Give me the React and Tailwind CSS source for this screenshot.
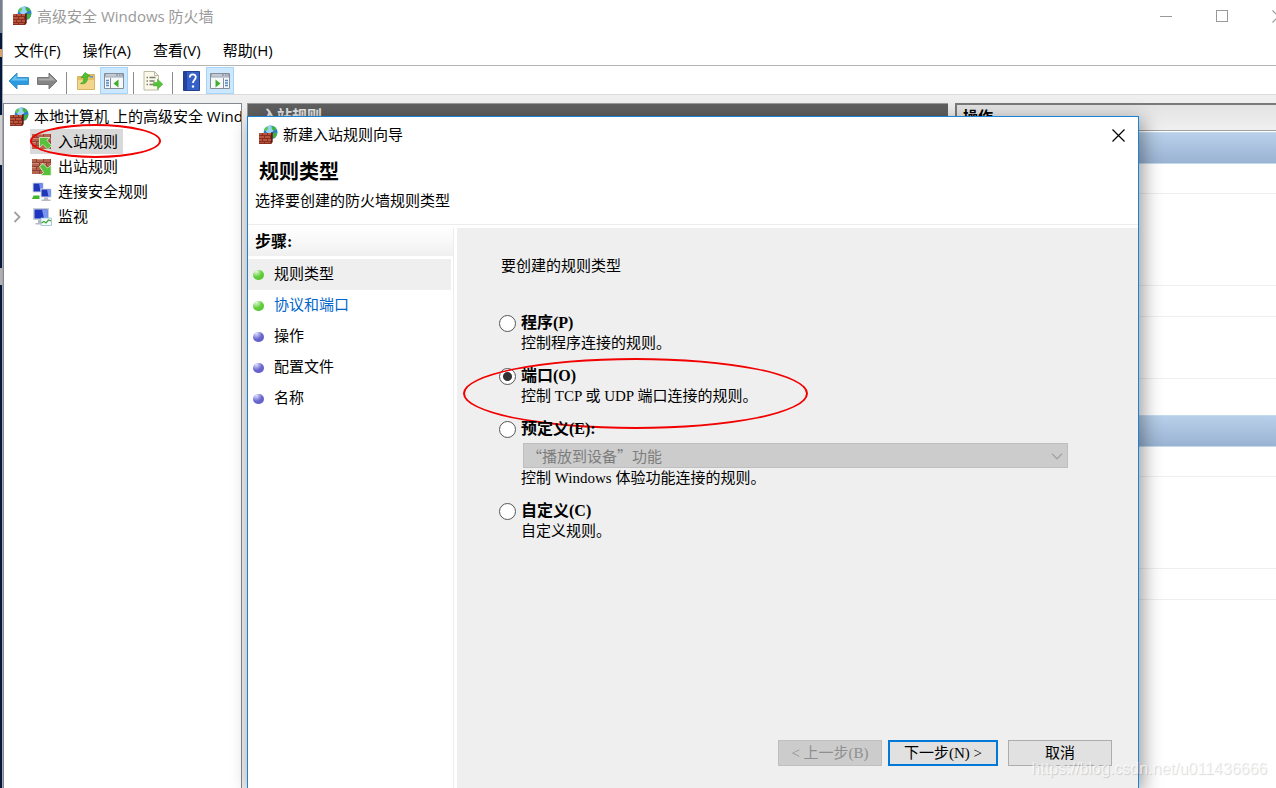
const uiFont = "font-['Open_Sans','Noto_Sans_CJK_SC',sans-serif]"
const songFont = "font-['Liberation_Serif','Noto_Sans_CJK_SC',serif]"

function FirewallIcon() {
  return (
    <svg className="shrink-0" width="20" height="20" viewBox="0 0 20 20" aria-hidden="true">
      <circle cx="12.600" cy="7.400" r="6.900" fill="#2f7fd0" />
      <circle cx="11.500" cy="4.600" r="3.800" fill="#a5dcf8" opacity=".9" />
      <path d="M13.500 1c2 0 3.800 1.200 4.800 2.800l-1.300 1.800-2-.4-1.200-1.400zM15 8.500l3.900-1.200c.3 2.500-.8 4.900-2.600 6.100l-1.500-1.600z" fill="#3db53a" />
      <path d="M6.500 3.500l2.600-2 1.200 1.800-1.400 2.200-2.400.8z" fill="#5cc950" />
      <path d="M1 8h12l1.500-1.200V17L13 19H1z" fill="#8a2f1f" />
      <path d="M13 8l1.500-1.200V17L13 19z" fill="#5c1d14" />
      <path d="M1 8h3v2H1zM5 8h4v2H5zM10 8h3v2h-3zM1 11h5v2H1zM7 11h5v2H7zM1 14h3v2H1zM5 14h4v2H5zM10 14h3v2h-3zM1 17h5v1H1zM7 17h5v1H7z" fill="#b8553c" />
    </svg>
  )
}

function BrickIcon({ out }) {
  return (
    <svg width="20" height="18" viewBox="0 0 20 18" aria-hidden="true">
      <path d="M0 1h19v15H0z" fill="#8c4334" />
      <g fill="#b5624f">
        <path d="M0 1h4v3H0zM5 1h6v3H5zM12 1h6v3h-6zM0 5h7v3H0zM8 5h6v3H8zM15 5h4v3h-4zM0 9h4v3H0zM5 9h6v3H5zM12 9h6v3h-6zM0 13h7v3H0zM8 13h6v3H8z" />
      </g>
      <path d="M5 1h6v1H5zM0 5h7v1H0zM8 5h6v1H8zM0 9h4v1H0z" fill="#d08a74" />
      {out ? (
        <path d="M7.500 8.500l3.500-3 4.500 4.500 3.600-2.800v10.300H8.800l2.700-3z" fill="#56c13b" stroke="#e8f7df" strokeWidth=".8" />
      ) : (
        <path d="M7.500 4.500h10.300l-3 2.700 4.700 5.300-3.500 4-5-5-3.500 3z" fill="#56c13b" stroke="#e8f7df" strokeWidth=".8" />
      )}
    </svg>
  )
}

function ConnectionIcon() {
  return (
    <svg width="20" height="20" viewBox="0 0 20 20" aria-hidden="true">
      <path d="M.5.500h11v10H.5z" fill="#d5dce6" />
      <path d="M1.500 1.500h9v8h-9z" fill="#1f37b8" />
      <path d="M7 1.500h3.500v8H8.500z" fill="#6f8cf0" />
      <path d="M8.500 6.500h11v9h-11z" fill="#d5dce6" />
      <path d="M9.500 7.500h9v7h-9z" fill="#1f37b8" />
      <path d="M15 7.500h3.500v7h-2z" fill="#7b97f4" />
      <path d="M12 15.500h4v2h2.500v1.500h-9v-1.500H12z" fill="#b3bac3" />
      <path d="M1.500 13.500h6v3.500H0z" fill="#43b52f" />
    </svg>
  )
}

function MonitorIcon() {
  return (
    <svg width="20" height="20" viewBox="0 0 20 20" aria-hidden="true">
      <path d="M1 1h16v12H1z" fill="#c9cfd8" />
      <path d="M2.500 2.500h13v9h-13z" fill="#1f37c0" />
      <path d="M10 2.500h5.500v9H12z" fill="#7895f2" />
      <path d="M6 13h5v3H6zM3.500 16h9v1.500h-9z" fill="#b3bac3" />
      <path d="M9 11h10.500v7.500H9z" fill="#f4fafc" stroke="#93bdd0" strokeWidth=".8" />
      <path d="M9.500 16l2.500-1.500 2 1.500 2.500-3 2.500 1" fill="none" stroke="#3ba531" strokeWidth="1.200" />
    </svg>
  )
}

function ArrowIcon({ forward }) {
  return forward ? (
    <svg width="22" height="20" viewBox="0 0 22 20" aria-hidden="true">
      <path d="M21 10l-8-8v4.500H1.500v7H13V18z" fill="#858585" stroke="#777" />
      <path d="M19 9.500l-5.500-5.500v3.500H2.500v2z" fill="#acacac" />
    </svg>
  ) : (
    <svg width="22" height="20" viewBox="0 0 22 20" aria-hidden="true">
      <path d="M1 10l8-8v4.500h11.500v7H9V18z" fill="#2a9be2" stroke="#3a93cc" />
      <path d="M3 9.500l5.500-5.500v3.500h11v2z" fill="#6cc3f2" />
    </svg>
  )
}

function FolderUpIcon() {
  return (
    <svg width="20" height="20" viewBox="0 0 20 20" aria-hidden="true">
      <path d="M1.500 5.500h7l1.500-2h8.500v15h-17z" fill="#e6bf63" stroke="#d9b463" />
      <path d="M2 9h16v9H2z" fill="#f3d68b" />
      <path d="M14 5h3v1.500h-3z" fill="#4d94d8" />
      <path d="M4.500 12.500c2.500-.8 3.500-2.800 3.300-6L5 6.800l4-5.300L14 5l-2.600.6c.6 5-2 8.200-6.900 6.900z" fill="#4fc032" stroke="#39951f" strokeWidth=".6" />
    </svg>
  )
}

function PaneIcon({ right }) {
  return (
    <svg width="20" height="18" viewBox="0 0 20 18" aria-hidden="true">
      <path d="M.5 1.500h19v15H.5z" fill="#f7f8fa" stroke="#858d99" />
      <path d="M1 2h18v4H1z" fill="#9aa3b0" />
      <path d="M1 4.500h18V6H1z" fill="#c9cfd8" />
      <path d="M2 2.500h10v1H2zM14 2.500h1v1h-1zM16.500 2.500h1v1h-1z" fill="#eef1f5" />
      {right ? (
        <>
          <path d="M13.500 6v10" stroke="#858d99" />
          <path d="M15 8.500h3M15 11h3M15 13.500h3" stroke="#5286c4" strokeWidth="1.300" />
          <path d="M5.500 7.500l5 4-5 4z" fill="#3fae2a" />
        </>
      ) : (
        <>
          <path d="M6.500 6v10" stroke="#858d99" />
          <path d="M2 8.500h3M2 11h3M2 13.500h3" stroke="#5286c4" strokeWidth="1.300" />
          <path d="M14.500 7.500l-5 4 5 4z" fill="#3fae2a" />
        </>
      )}
    </svg>
  )
}

function ExportIcon() {
  return (
    <svg width="20" height="20" viewBox="0 0 20 20" aria-hidden="true">
      <path d="M1 .5h10.500l4 4V19H1z" fill="#fbf9ea" stroke="#bdbaa3" />
      <path d="M11.500.5v4h4" fill="none" stroke="#bdbaa3" />
      <path d="M3.500 6.500H5M3.500 10H5M3.500 13.500H5M6.500 6.500h6M6.500 10h5M6.500 13.500h4" stroke="#7d7d72" strokeWidth="1.400" />
      <path d="M10.500 11.500h4V8.200l5.300 5-5.300 5v-3.300h-4z" fill="#56c13b" stroke="#4aab34" strokeWidth=".6" />
    </svg>
  )
}

function HelpIcon() {
  return (
    <svg width="18" height="20" viewBox="0 0 18 20" aria-hidden="true">
      <path d="M.5.500h16v19H.5z" fill="#3560c8" stroke="#24418f" />
      <path d="M1 1h3v18H1z" fill="#23439c" />
      <path d="M6.800 6.500c0-4 6-4 6-.5 0 2.800-2.800 2.800-2.800 6" fill="none" stroke="#fff" strokeWidth="1.800" />
      <circle cx="10" cy="15.500" r="1.200" fill="#fff" />
    </svg>
  )
}

function CloseIcon() {
  return (
    <svg width="13" height="13" viewBox="0 0 13 13" aria-hidden="true">
      <path d="M.5.500l12 12M12.500.500l-12 12" stroke="currentColor" strokeWidth="1.200" />
    </svg>
  )
}

function ToolButton({ label, active, children }) {
  return (
    <button
      aria-label={label}
      className={`flex h-[27px] w-7 items-center justify-center border ${active ? 'border-[#a5d5fb] bg-[#cce8ff]' : 'border-transparent'}`}
    >
      {children}
    </button>
  )
}

function ToolSeparator() {
  return (
    <div className="flex w-[11px] justify-center">
      <div className="h-[22px] w-px bg-[#8c8c8c]" />
    </div>
  )
}

const menus = ['文件(F)', '操作(A)', '查看(V)', '帮助(H)']

const treeItems = [
  { text: '入站规则', icon: <BrickIcon />, selected: true },
  { text: '出站规则', icon: <BrickIcon out /> },
  { text: '连接安全规则', icon: <ConnectionIcon /> },
  { text: '监视', icon: <MonitorIcon />, expandable: true },
]

const steps = [
  { text: '规则类型', state: 'current' },
  { text: '协议和端口', state: 'link' },
  { text: '操作', state: 'todo' },
  { text: '配置文件', state: 'todo' },
  { text: '名称', state: 'todo' },
]

function TitleBar() {
  return (
    <div className="flex h-8 items-center overflow-hidden bg-white pl-[9px] text-[#999]">
      <FirewallIcon />
      <h1 className="ml-[5px] flex-1 text-[15px] leading-5">高级安全 Windows 防火墙</h1>
      <div className="-mr-[30px] flex shrink-0">
        <button aria-label="最小化" className="flex h-8 w-14 items-center justify-center">
          <span className="h-px w-3 bg-[#999]" />
        </button>
        <button aria-label="最大化" className="flex h-8 w-14 items-center justify-center">
          <span className="size-3 border border-[#999]" />
        </button>
        <button aria-label="关闭" className="flex h-8 w-14 items-center justify-center">
          <CloseIcon />
        </button>
      </div>
    </div>
  )
}

function Toolbar() {
  return (
    <div className="flex h-[29px] items-end border-b border-[#dcdcdc] bg-white pl-0.5">
      <ToolButton label="后退"><ArrowIcon /></ToolButton>
      <ToolButton label="前进"><ArrowIcon forward /></ToolButton>
      <ToolSeparator />
      <ToolButton label="上一级"><FolderUpIcon /></ToolButton>
      <ToolButton label="控制台树" active><PaneIcon /></ToolButton>
      <ToolSeparator />
      <ToolButton label="导出列表"><ExportIcon /></ToolButton>
      <ToolSeparator />
      <ToolButton label="帮助"><HelpIcon /></ToolButton>
      <ToolButton label="操作窗格" active><PaneIcon right /></ToolButton>
    </div>
  )
}

function Tree() {
  return (
    <nav className="w-[239px] shrink-0 overflow-hidden border-x border-t border-[#828790] bg-white text-[15px] leading-[25px] whitespace-nowrap text-black">
      <div className="flex items-center gap-[5px] pl-[5px]">
        <FirewallIcon />
        <span>本地计算机 上的高级安全 Windows</span>
      </div>
      <ul>
        {treeItems.map((item) => (
          <li key={item.text} className="flex items-center pl-[9px]">
            <span className="w-[17px]">
              {item.expandable && (
                <svg width="8" height="12" viewBox="0 0 8 12" aria-hidden="true">
                  <path d="M1.500 1l5 5-5 5" fill="none" stroke="#a0a0a0" strokeWidth="1.800" />
                </svg>
              )}
            </span>
            <span className={`relative flex items-center gap-1.5 pr-[5px] pl-0.5 ${item.selected ? 'bg-[#d9d9d9]' : ''}`}>
              {item.icon}
              {item.text}
              {item.selected && (
                <span className="absolute top-[-5px] left-0 h-[34px] w-[131px] rounded-[50%] border-2 border-[#f20000]" />
              )}
            </span>
          </li>
        ))}
      </ul>
    </nav>
  )
}

function ActionsPane() {
  return (
    <aside className="flex w-[321px] shrink-0 flex-col border-t-2 border-l-2 border-[#7a7a7a] bg-white">
      <h2 className="h-[26px] border-b border-[#a0a0a0] bg-linear-to-b from-[#e3e3e3] to-[#f0f0f0] pl-1.5 text-[15px] leading-[23px] font-bold">
        操作
      </h2>
      <div className="mt-px h-8 border-y border-[#c6daee] bg-linear-to-b from-[#b8d0ea] to-[#9ab3d2]" />
      <div className="h-[30px] border-b border-[#efefef]" />
      <div className="h-[92px] border-b border-[#efefef]" />
      <div className="h-[31px] border-b border-[#efefef]" />
      <div className="h-[62px] border-b border-[#efefef]" />
      <div className="mt-9 h-8 border-y border-[#c6daee] bg-linear-to-b from-[#b8d0ea] to-[#9ab3d2]" />
      <div className="h-[30px] border-b border-[#efefef]" />
      <div className="h-[92px] border-b border-[#efefef]" />
      <div className="h-[31px] border-b border-[#efefef]" />
    </aside>
  )
}

function Bullet({ green }) {
  return (
    <span
      className={`h-[10px] w-[11px] rounded-full ${green ? 'bg-[radial-gradient(circle_at_30%_15%,#e6f7df,#5fce38_50%,#55c232)]' : 'bg-[radial-gradient(circle_at_30%_15%,#dfe3fc,#6a66d0_50%,#5f5bc6)]'}`}
    />
  )
}

function Option({ id, label, desc, checked, children }) {
  return (
    <div className="relative">
      <div className="flex items-center gap-[5px]">
        <input
          type="radio"
          name="ruleType"
          id={id}
          defaultChecked={checked}
          className="size-[17px] appearance-none rounded-full border border-[#555] bg-white checked:bg-[radial-gradient(circle,#333_4px,#fff_5px)]"
        />
        <label htmlFor={id} className="text-[16px] leading-5 font-bold">{label}</label>
      </div>
      {children}
      <p className="pl-[22px] leading-5">{desc}</p>
      {checked && (
        <span className="absolute -top-2 -left-9 h-[71px] w-[345px] rounded-[50%] border-2 border-[#f20000]" />
      )}
    </div>
  )
}

function Wizard() {
  return (
    <section
      role="dialog"
      aria-labelledby="wizardTitle"
      className={`absolute top-[116px] right-[137px] bottom-0 left-[247px] flex flex-col border-x border-t border-[#1883d7] bg-white text-[15px] text-black shadow-[4px_4px_18px_rgba(0,0,0,0.4)] ${songFont}`}
    >
      <div className="flex h-9 shrink-0 items-center pr-[13px] pl-[10px]">
        <FirewallIcon />
        <h2 id="wizardTitle" className="ml-[5px] flex-1 leading-5">新建入站规则向导</h2>
        <button aria-label="关闭" className="text-black"><CloseIcon /></button>
      </div>
      <header className="border-b border-[#ececec] pt-[3px] pb-[10px]">
        <h3 className="pl-[11px] text-[20px] leading-8 font-bold">规则类型</h3>
        <p className="pl-[7px] leading-[26px]">选择要创建的防火墙规则类型</p>
      </header>

      <div className="mt-[3px] flex flex-1">
        <div className="w-[206px] shrink-0 border-r border-[#ececec]">
          <h4 className="h-7 bg-linear-to-b from-white to-[#f0f0f0] pl-[7px] text-[16px] leading-[27px] font-bold">步骤:</h4>
          <ul className="mt-[3px]">
            {steps.map((s) => (
              <li
                key={s.text}
                className={`mr-0.5 flex h-[31px] items-center gap-2.5 pl-[5px] ${s.state === 'current' ? 'bg-[#efefef]' : ''}`}
              >
                <Bullet green={s.state !== 'todo'} />
                {s.state === 'link' ? <a href="#" className="text-[#0066cc]">{s.text}</a> : <span>{s.text}</span>}
              </li>
            ))}
          </ul>
        </div>

        <form className="ml-[3px] flex flex-1 flex-col bg-[#efefef] pt-7 pr-[26px] pb-[22px] pl-[42px]">
          <p className="pl-0.5 leading-5">要创建的规则类型</p>
          <div className="mt-[37px] flex flex-col gap-[13px]">
            <Option id="program" label="程序(P)" desc="控制程序连接的规则。" />
            <Option id="port" label="端口(O)" desc="控制 TCP 或 UDP 端口连接的规则。" checked />
            <Option id="predefined" label="预定义(E):" desc="控制 Windows 体验功能连接的规则。">
              <div className="relative mt-1 mr-11 ml-6">
                <select
                  disabled
                  aria-label="预定义"
                  className="block h-[25px] w-full appearance-none border border-[#bfbfbf] bg-[#ccc] pl-[3px] font-['Noto_Sans_CJK_SC',sans-serif] text-[15px] leading-5 text-[#7d7d7d] opacity-100"
                >
                  <option>“播放到设备”功能</option>
                </select>
                <svg className="absolute top-[10px] right-[5px]" width="12" height="7" viewBox="0 0 12 7" aria-hidden="true">
                  <path d="M1 .8l5 5 5-5" fill="none" stroke="#a3a3a3" strokeWidth="1.300" />
                </svg>
              </div>
            </Option>
            <Option id="custom" label="自定义(C)" desc="自定义规则。" />
          </div>
          <div className="mt-auto flex justify-end leading-5">
            <button type="button" disabled className="h-[26px] w-[104px] border border-[#bfbfbf] bg-[#ccc] text-[#8f8f8f]">
              &lt; 上一步(B)
            </button>
            <button type="button" className="ml-1.5 h-[26px] w-[110px] border-2 border-[#0078d7] bg-[#e1e1e1]">
              下一步(N) &gt;
            </button>
            <button type="button" className="ml-2.5 h-[26px] w-[104px] border border-[#adadad] bg-[#e1e1e1]">
              取消
            </button>
          </div>
        </form>
      </div>
    </section>
  )
}

export default function App() {
  return (
    <div className={`relative flex h-screen overflow-hidden bg-[#efefef] text-black ${uiFont}`}>
      {/* desktop showing behind the window's left edge */}
      <div className="flex w-[3px] shrink-0 flex-col border-r border-[#a4a7ad] bg-[#05193d]">
        <div className="h-[33px] bg-[#76808e]" />
        <div className="mt-4 h-2 bg-[#d8a46c]" />
        <div className="mt-[58px] h-[50px] bg-[#d0d0d0]" />
        <div className="mt-[103px] h-[17px] bg-[#b0b0b0]" />
      </div>
      <div className="flex min-w-0 flex-1 flex-col">
        <TitleBar />
        <div className="flex h-[34px] items-center gap-[22px] border-b border-[#b4b4b4] bg-white pt-1 pl-[11px] text-[15px]">
          {menus.map((m) => (
            <button key={m}>{m}</button>
          ))}
        </div>
        <Toolbar />
        <div className="flex flex-1 pt-2">
          <Tree />
          <main className="mr-[7px] ml-[5px] flex-1 border-t border-l border-[#9a9a9a] bg-white">
            <h2 className="h-7 bg-[#606060] pl-3.5 text-[15px] leading-[23px] font-bold text-[#e8e8e8]">入站规则</h2>
          </main>
          <ActionsPane />
        </div>
      </div>
      <Wizard />
      <span className="absolute right-[9px] bottom-[9px] font-['Liberation_Sans',sans-serif] text-[16px] leading-5 text-white/70 [text-shadow:1px_1px_1px_rgba(0,0,0,0.15)]">
        https://blog.csdn.net/u011436666
      </span>
    </div>
  )
}
